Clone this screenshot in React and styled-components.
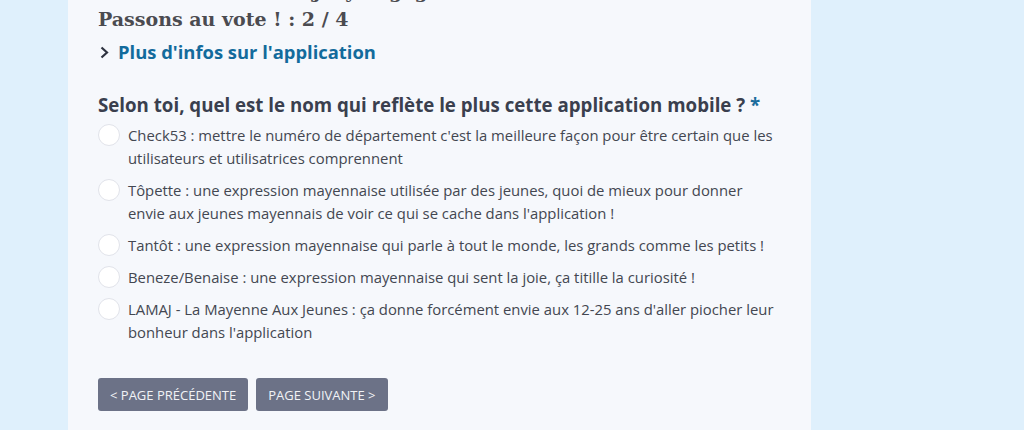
import React from "react";
import styled, { createGlobalStyle } from "styled-components";

const Global = createGlobalStyle`
  html, body { margin: 0; padding: 0; background: #dff0fc; }
  body { font-family: "Open Sans", "Noto Sans", sans-serif; }
`;

const Page = styled.div`
  display: flex;
  min-height: 430px;
  overflow: hidden;
`;

const Card = styled.main`
  margin-left: 68px;
  width: 743px;
  box-sizing: border-box;
  background: #f6f8fc;
  padding: 0 30px 20px 30px;
  min-height: 430px;
`;

const SerifHeading = styled.h2`
  margin: 0;
  font-family: "DejaVu Serif", "Liberation Serif", serif;
  font-weight: 600;
  font-size: 19px;
  line-height: 26px;
  color: #4b4b50;
`;

const PrevHeading = styled(SerifHeading)`
  margin-top: -22px;
  margin-bottom: 2px;
`;

const InfoLink = styled.a`
  display: flex;
  align-items: center;
  gap: 9px;
  margin-top: 8px;
  font-weight: 700;
  font-size: 18.4px;
  line-height: 24px;
  color: #136b9c;
  text-decoration: none;
  cursor: pointer;
  svg { flex: none; margin-left: 2px; }
`;

const Question = styled.fieldset`
  border: 0;
  margin: 28px 0 0 0;
  padding: 0;
`;

const Legend = styled.legend`
  padding: 0;
  font-weight: 700;
  font-size: 18.7px;
  line-height: 26px;
  color: #3a3f4e;
`;

const Star = styled.span`
  color: #1b6d9c;
`;

const Options = styled.div`
  display: flex;
  flex-direction: column;
  gap: 9px;
  margin-top: 6px;
`;

const Option = styled.label`
  display: flex;
  align-items: flex-start;
  gap: 8px;
  font-size: 14.85px;
  line-height: 23px;
  color: #434751;
  cursor: pointer;
  padding-right: 4px;
`;

const Radio = styled.span`
  flex: none;
  width: 22px;
  height: 22px;
  box-sizing: border-box;
  border-radius: 50%;
  background: #ffffff;
  border: 1px solid #e1e3ea;
`;

const Nav = styled.div`
  display: flex;
  gap: 8px;
  margin-top: 34px;
`;

const NavButton = styled.button`
  height: 33px;
  padding: 0 12px;
  border: 0;
  border-radius: 3px;
  background: #6c7287;
  color: #f1f2f6;
  font-family: "Open Sans", "Noto Sans", sans-serif;
  font-size: 13px;
  text-transform: uppercase;
  cursor: pointer;
`;

const options = [
  "Check53 : mettre le numéro de département c'est la meilleure façon pour être certain que les utilisateurs et utilisatrices comprennent",
  "Tôpette : une expression mayennaise utilisée par des jeunes, quoi de mieux pour donner envie aux jeunes mayennais de voir ce qui se cache dans l'application !",
  "Tantôt : une expression mayennaise qui parle à tout le monde, les grands comme les petits !",
  "Beneze/Benaise : une expression mayennaise qui sent la joie, ça titille la curiosité !",
  "LAMAJ - La Mayenne Aux Jeunes : ça donne forcément envie aux 12-25 ans d'aller piocher leur bonheur dans l'application",
];

export default function App() {
  return (
    <>
      <Global />
      <Page>
        <Card>
          <PrevHeading>Les 40 membres du Jury engagé</PrevHeading>
          <SerifHeading>Passons au vote ! : 2 / 4</SerifHeading>
          <InfoLink>
            <svg width="9" height="13" viewBox="0 0 9 13">
              <polyline points="1.5,1.5 7,6.5 1.5,11.5" fill="none" stroke="#2e3340" strokeWidth="2.2" strokeLinejoin="miter" />
            </svg>
            Plus d'infos sur l'application
          </InfoLink>
          <Question>
            <Legend>
              Selon toi, quel est le nom qui reflète le plus cette application mobile ? <Star>*</Star>
            </Legend>
            <Options>
              {options.map((o) => (
                <Option key={o}>
                  <Radio />
                  <span>{o}</span>
                </Option>
              ))}
            </Options>
          </Question>
          <Nav>
            <NavButton>&lt; Page précédente</NavButton>
            <NavButton>Page suivante &gt;</NavButton>
          </Nav>
        </Card>
      </Page>
    </>
  );
}
